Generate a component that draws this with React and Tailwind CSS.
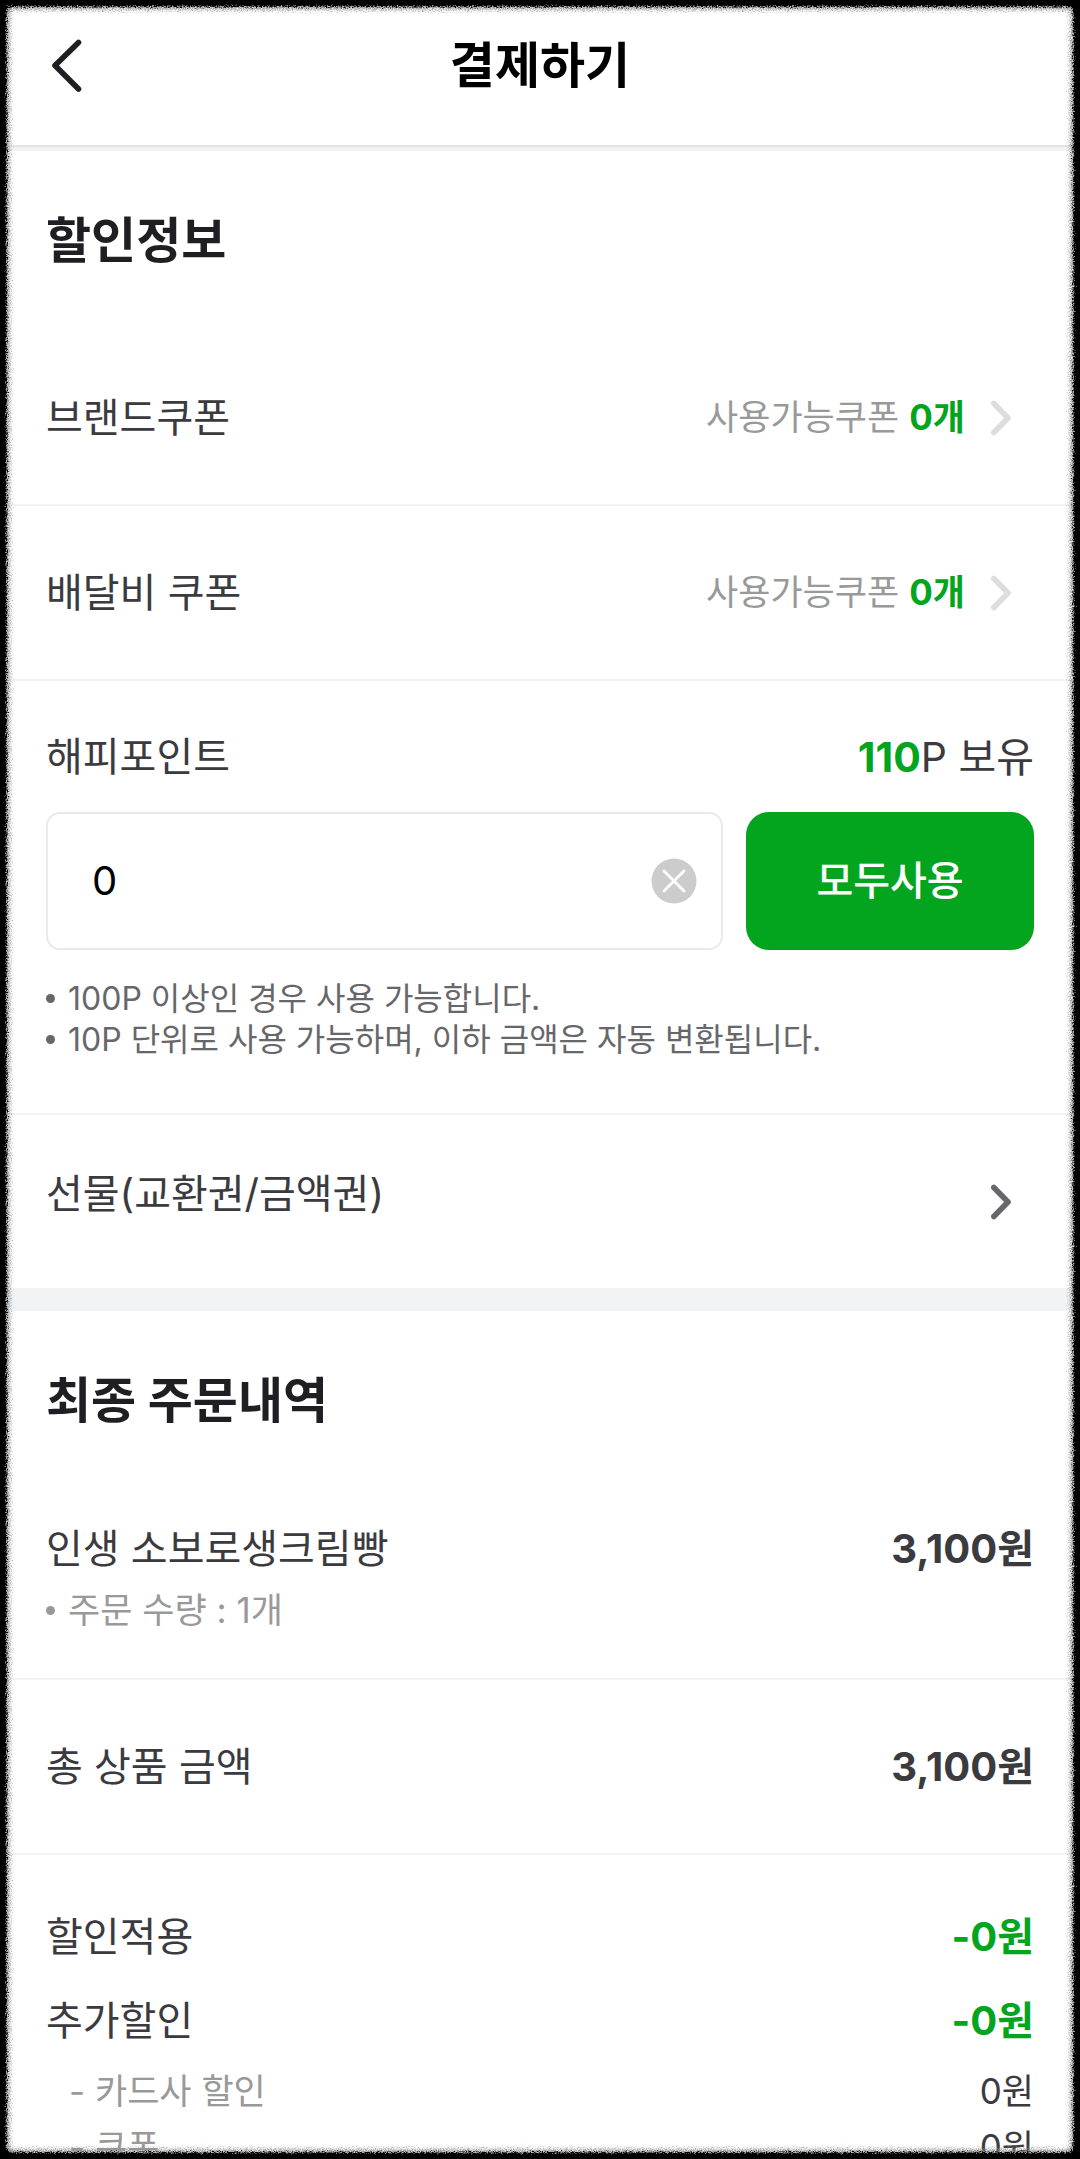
import React, { useState } from 'react';
import { clsx } from 'clsx';

const POINT_BALANCE = 110;

const coupons = [
  { id: 'brand', label: '브랜드쿠폰', count: 0 },
  { id: 'delivery', label: '배달비 쿠폰', count: 0 },
];

const pointNotes = [
  '100P 이상인 경우 사용 가능합니다.',
  '10P 단위로 사용 가능하며, 이하 금액은 자동 변환됩니다.',
];

const discounts = [
  { label: '할인적용', value: '-0원' },
  { label: '추가할인', value: '-0원' },
];

const discountDetails = [
  { label: '- 카드사 할인', value: '0원' },
  { label: '- 쿠폰', value: '0원' },
];

function ChevronRight({ className }) {
  return (
    <svg viewBox="0 0 20 36" className={clsx('w-5 h-9 mr-[23px] shrink-0', className)} fill="none" stroke="currentColor" strokeWidth="5.6" strokeLinecap="round" strokeLinejoin="round" aria-hidden="true">
      <path d="M2.8 3.5 17 18 2.8 32.5" />
    </svg>
  );
}

function SectionTitle({ children }) {
  return (
    <h2 className="h-[180px] px-[46px] flex items-center text-[49px] font-bold text-[#1f1f23]">{children}</h2>
  );
}

// Rough black border drawn over the edges of the screen
function RoughFrame() {
  return (
    <svg className="absolute inset-0 w-full h-full pointer-events-none" aria-hidden="true">
      <defs>
        <filter id="rough" x="0" y="0" width="100%" height="100%" filterUnits="userSpaceOnUse">
          <feTurbulence type="fractalNoise" baseFrequency="0.8" numOctaves="2" seed="4" result="noise" />
          <feDisplacementMap in="SourceGraphic" in2="noise" scale="8" xChannelSelector="R" yChannelSelector="G" />
        </filter>
        <filter id="soft" x="0" y="0" width="100%" height="100%" filterUnits="userSpaceOnUse">
          <feGaussianBlur stdDeviation="2" result="blur" />
          <feTurbulence type="fractalNoise" baseFrequency="0.8" numOctaves="2" seed="9" result="noise" />
          <feDisplacementMap in="blur" in2="noise" scale="10" xChannelSelector="R" yChannelSelector="G" />
        </filter>
      </defs>
      <rect width="100%" height="100%" rx="14" fill="none" stroke="#8c8c8c" strokeWidth="18" filter="url(#soft)" />
      <rect width="100%" height="100%" rx="12" fill="none" stroke="#000" strokeWidth="13" filter="url(#rough)" />
    </svg>
  );
}

export default function App() {
  const [point, setPoint] = useState('0');

  return (
    <div className="relative h-screen overflow-hidden bg-white font-[Inter,'Noto_Sans_CJK_KR',sans-serif] text-[40px] text-[#3b3b3f]">
      {/* Header */}
      <header className="h-[151px] pb-4 border-b-4 border-[#f2f2f2] shadow-[inset_0_-2px_0_#e3e3e3] grid grid-cols-[1fr_auto_1fr] items-center px-[46px]">
        <button type="button" aria-label="뒤로" className="justify-self-start">
          <svg viewBox="0 0 40 54" className="w-10 h-[54px] text-[#1f1f23]" fill="none" stroke="currentColor" strokeWidth="5.6" strokeLinecap="round" strokeLinejoin="round">
            <path d="M32.5 3.5 9 26.5 32.5 50" />
          </svg>
        </button>
        <h1 className="text-[49px] leading-[70px] font-bold text-black">결제하기</h1>
      </header>

      <main>
        {/* Discounts */}
        <section>
          <SectionTitle>할인정보</SectionTitle>

          {coupons.map((coupon) => (
            <button
              key={coupon.id}
              type="button"
              className="w-full h-[175px] px-[46px] border-b-2 border-[#f2f2f2] flex items-center justify-between"
            >
              <span>{coupon.label}</span>
              <span className="flex items-center text-[35px] text-[#999]">
                사용가능쿠폰
                <strong className="ml-[10px] mr-[26px] font-bold text-[#04a51e]">{coupon.count}개</strong>
                <ChevronRight className="text-[#ddd]" />
              </span>
            </button>
          ))}

          <div className="px-[46px] pt-[41px] pb-[53px] border-b-2 border-[#f2f2f2]">
            <div className="flex items-center justify-between leading-[70px]">
              <label htmlFor="point">해피포인트</label>
              <p className="text-[41px]">
                <strong className="font-bold text-[#04a51e]">{POINT_BALANCE}</strong>P 보유
              </p>
            </div>
            <div className="mt-5 flex gap-[23px]">
              <div className="flex-1 min-w-0 h-[138px] pl-11 pr-6 rounded-[14px] border-2 border-[#e9e9ee] flex items-center">
                <input
                  id="point"
                  type="text"
                  inputMode="numeric"
                  value={point}
                  onChange={(e) => setPoint(e.target.value)}
                  className="flex-1 min-w-0 text-black outline-none"
                />
                <button type="button" aria-label="지우기" onClick={() => setPoint('0')}>
                  <svg viewBox="0 0 46 46" className="w-[46px] h-[46px]">
                    <circle cx="23" cy="23" r="22.5" fill="#ccc" />
                    <path d="M13 13 33 33M33 13 13 33" stroke="#fff" strokeWidth="2.8" strokeLinecap="round" />
                  </svg>
                </button>
              </div>
              <button
                type="button"
                onClick={() => setPoint(String(POINT_BALANCE))}
                className="w-[288px] h-[138px] rounded-[23px] bg-[#04a51e] text-white font-medium"
              >
                모두사용
              </button>
            </div>
            <ul className="mt-[28px] text-[32px] leading-[41px] text-[#67676b]">
              {pointNotes.map((note) => (
                <li key={note} className="flex items-center">
                  <span className="w-[9px] h-[9px] mr-[13px] rounded-full bg-[#67676b]" />
                  {note}
                </li>
              ))}
            </ul>
          </div>

          <button type="button" className="w-full h-[173px] px-[46px] flex items-center justify-between">
            <span className="pb-4">선물(교환권/금액권)</span>
            <ChevronRight className="text-[#67676b]" />
          </button>
        </section>

        <div className="h-[23px] bg-[#f1f3f5]" />

        {/* Order summary */}
        <section>
          <SectionTitle>최종 주문내역</SectionTitle>

          <div className="px-[46px] pt-[27px] pb-[38px] border-b-2 border-[#f2f2f2]">
            <div className="flex items-center justify-between leading-[62px]">
              <span>인생 소보로생크림빵</span>
              <strong className="font-bold">3,100원</strong>
            </div>
            <p className="flex items-center text-[35px] leading-[60px] text-[#999]">
              <span className="w-[9px] h-[9px] mr-[13px] rounded-full bg-[#999]" />
              주문 수량 : 1개
            </p>
          </div>

          <div className="h-[175px] px-[46px] border-b-2 border-[#f2f2f2] flex items-center justify-between">
            <span>총 상품 금액</span>
            <strong className="font-bold">3,100원</strong>
          </div>

          <dl className="px-[46px] pt-10">
            {discounts.map((row) => (
              <div key={row.label} className="flex items-center justify-between leading-[84px]">
                <dt>{row.label}</dt>
                <dd className="font-bold text-[#04a51e]">{row.value}</dd>
              </div>
            ))}
            {discountDetails.map((row) => (
              <div key={row.label} className="pl-[23px] flex items-center justify-between text-[35px] leading-[56px]">
                <dt className="text-[#999]">{row.label}</dt>
                <dd>{row.value}</dd>
              </div>
            ))}
          </dl>
        </section>
      </main>

      <RoughFrame />
    </div>
  );
}
